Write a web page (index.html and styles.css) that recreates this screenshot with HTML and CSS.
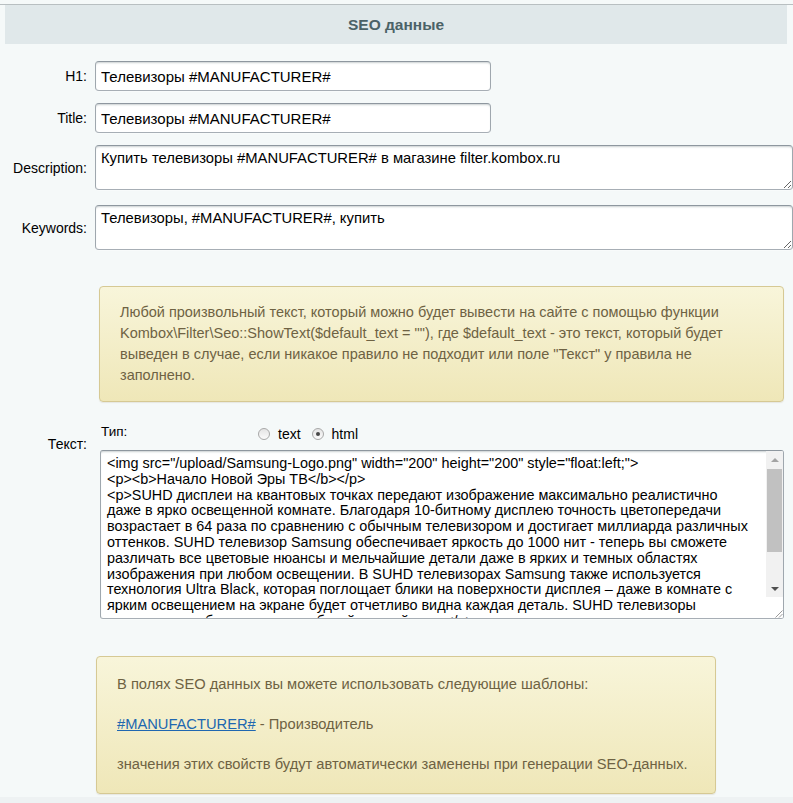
FILE: index.html
```html
<!DOCTYPE html>
<html lang="ru">
<head>
<meta charset="utf-8">
<title>SEO данные</title>
<link rel="stylesheet" href="styles.css">
</head>
<body>
<div class="frame">
  <div class="head">SEO данные</div>

  <div class="row r1">
    <label class="lbl">H1:</label>
    <input class="inp" type="text" value="Телевизоры #MANUFACTURER#">
  </div>
  <div class="row r2">
    <label class="lbl">Title:</label>
    <input class="inp" type="text" value="Телевизоры #MANUFACTURER#">
  </div>
  <div class="row r3">
    <label class="lbl">Description:</label>
    <textarea class="tas">Купить телевизоры #MANUFACTURER# в магазине filter.kombox.ru</textarea>
  </div>
  <div class="row r4">
    <label class="lbl">Keywords:</label>
    <textarea class="tas">Телевизоры, #MANUFACTURER#, купить</textarea>
  </div>

  <div class="msg msg1">Любой произвольный текст, который можно будет вывести на сайте с помощью функции Kombox\Filter\Seo::ShowText($default_text = ""), где $default_text - это текст, который будет выведен в случае, если никакое правило не подходит или поле "Текст" у правила не заполнено.</div>

  <div class="row-text">
    <label class="lbl lbl-t">Текст:</label>
    <div class="tcol">
      <div class="typerow">
        <span class="tip">Тип:</span>
        <span class="radio"></span><span class="rlabel">text</span>
        <span class="radio checked"></span><span class="rlabel">html</span>
      </div>
      <div class="bigta">
        <div class="bigtxt"><div>&lt;img src="/upload/Samsung-Logo.png" width="200" height="200" style="float:left;"&gt;</div><div>&lt;p&gt;&lt;b&gt;Начало Новой Эры ТВ&lt;/b&gt;&lt;/p&gt;</div><div>&lt;p&gt;SUHD дисплеи на квантовых точках передают изображение максимально реалистично</div><div>даже в ярко освещенной комнате. Благодаря 10-битному дисплею точность цветопередачи</div><div>возрастает в 64 раза по сравнению с обычным телевизором и достигает миллиарда различных</div><div>оттенков. SUHD телевизор Samsung обеспечивает яркость до 1000 нит - теперь вы сможете</div><div>различать все цветовые нюансы и мельчайшие детали даже в ярких и темных областях</div><div>изображения при любом освещении. В SUHD телевизорах Samsung также используется</div><div>технология Ultra Black, которая поглощает блики на поверхности дисплея – даже в комнате с</div><div>ярким освещением на экране будет отчетливо видна каждая деталь. SUHD телевизоры</div><div class="cutline">обеспечивают глубокий черный цвет.&lt;/p&gt;</div></div>
        <div class="sb">
          <div class="sb-btn"><span class="arr-up"></span></div>
          <div class="sb-track"><div class="sb-thumb"></div></div>
          <div class="sb-btn"><span class="arr-down"></span></div>
          <div class="sb-corner">
            <svg width="9" height="9" viewBox="0 0 9 9"><path d="M8.5 1.5 L1.5 8.5 M8.5 5 L5 8.5" stroke="#9a9a9a" stroke-width="1" fill="none"/></svg>
          </div>
        </div>
      </div>
    </div>
  </div>

  <div class="msg msg2">В полях SEO данных вы можете использовать следующие шаблоны:<br><br><a href="#" class="tpl">#MANUFACTURER#</a> - Производитель<br><br>значения этих свойств будут автоматически заменены при генерации SEO-данных.</div>

  <div class="foot"></div>
</div>
</body>
</html>
```
FILE: styles.css
```css
html, body {
  margin: 0;
  height: 100%;
  overflow: hidden;
}
body {
  background: #f5f9f9;
  font-family: "Liberation Sans", Arial, sans-serif;
  font-size: 14px;
  color: #000;
}
.frame {
  margin-top: 4px;
  border-top: 1px solid #b8bfc1;
  height: calc(100% - 5px);
  display: flex;
  flex-direction: column;
}
.head {
  flex: none;
  margin: 0 6px 0 5px;
  height: 39px;
  line-height: 39px;
  background: #e0e8ea;
  text-align: center;
  font-weight: bold;
  font-size: 15.5px;
  color: #4b6267;
}
.row {
  flex: none;
  display: flex;
  align-items: center;
}
.lbl {
  flex: none;
  width: 87px;
  margin-right: 8px;
  text-align: right;
  font-size: 14px;
  color: #000;
}
.r1 { margin-top: 17px; }
.r2 { margin-top: 12px; }
.r3 { margin-top: 12px; }
.r4 { margin-top: 15px; }

.inp, .tas, .bigta {
  box-sizing: border-box;
  border: 1px solid;
  border-color: #8e979f #9fa7ae #a7aeb5 #9fa7ae;
  border-radius: 4px;
  background: #fff;
  box-shadow: 0 1px 0 0 rgba(255,255,255,0.3), inset 0 2px 2px -1px rgba(180,188,191,0.7);
  font-family: "Liberation Sans", Arial, sans-serif;
  color: #000;
}
.inp {
  width: 396px;
  height: 30px;
  padding: 0 5px;
  margin: 0;
  font-size: 15px;
}
.tas {
  width: 702px;
  height: 45px;
  padding: 4px 5px;
  margin: 0;
  font-size: 14.8px;
  line-height: 17px;
  resize: both;
  overflow: auto;
}

.msg {
  flex: none;
  box-sizing: border-box;
  border: 1px solid #d6c994;
  border-radius: 4px;
  background: linear-gradient(to bottom, #f8f5da, #efe7b8);
  color: #6e6243;
  box-shadow: 0 1px 1px rgba(120,110,60,0.12);
}
.msg1 {
  margin: 36px 9px 0 99px;
  padding: 15px 20px 15px 20px;
  font-size: 14.5px;
  line-height: 21px;
}
.msg2 {
  align-self: flex-start;
  width: 620px;
  margin: 37px 0 0 96px;
  padding: 17px 20px 19px 20px;
  font-size: 14.7px;
  line-height: 20px;
}
.tpl {
  color: #2067b0;
  text-decoration: underline;
}

.row-text {
  flex: none;
  display: flex;
  align-items: flex-start;
  margin-top: 21px;
}
.lbl-t {
  margin-top: 11px;
  line-height: 20px;
}
.tcol {
  margin-left: 5px;
}
.typerow {
  display: flex;
  align-items: center;
  height: 20px;
  line-height: 20px;
}
.tip {
  width: 157px;
  padding-left: 1px;
  margin-top: -3px;
  font-size: 13.5px;
}
.radio {
  box-sizing: border-box;
  width: 12px;
  height: 12px;
  border-radius: 50%;
  border: 1px solid #a8a8a8;
  background: linear-gradient(to bottom, #e4e4e4, #fbfbfb);
  margin-top: 2px;
  display: flex;
  align-items: center;
  justify-content: center;
}
.radio.checked::after {
  content: "";
  width: 4px;
  height: 4px;
  border-radius: 50%;
  background: #474747;
}
.rlabel {
  margin: 2px 11px 0 8px;
  font-size: 14px;
}

.bigta {
  margin-top: 7px;
  width: 684px;
  height: 169px;
  display: flex;
  overflow: hidden;
  border-radius: 3px;
}
.bigtxt {
  flex: 1;
  min-width: 0;
  padding: 5px 6px;
  font-size: 14.4px;
  line-height: 15.8px;
  white-space: pre;
  overflow: hidden;
}
.cutline {
  padding-left: 90px;
}
.sb {
  flex: none;
  width: 17px;
  display: flex;
  flex-direction: column;
  background: #fff;
}
.sb-btn {
  height: 17px;
  flex: none;
  background: #f1f1f1;
  display: flex;
  align-items: center;
  justify-content: center;
}
.arr-up {
  width: 0;
  height: 0;
  border-left: 4px solid transparent;
  border-right: 4px solid transparent;
  border-bottom: 4px solid #a3a3a3;
}
.arr-down {
  width: 0;
  height: 0;
  border-left: 4px solid transparent;
  border-right: 4px solid transparent;
  border-top: 4px solid #505050;
}
.sb-track {
  height: 112px;
  flex: none;
  background: #f1f1f1;
  padding-top: 1px;
  box-sizing: border-box;
}
.sb-thumb {
  height: 83px;
  margin: 0 1px;
  background: #c1c1c1;
}
.sb-corner {
  flex: 1;
  background: #fff;
  display: flex;
  align-items: flex-end;
  justify-content: flex-end;
}
.sb-corner svg {
  display: block;
}

.foot {
  flex: 1;
  margin-top: 3px;
  background: #eef2f3;
}
```
